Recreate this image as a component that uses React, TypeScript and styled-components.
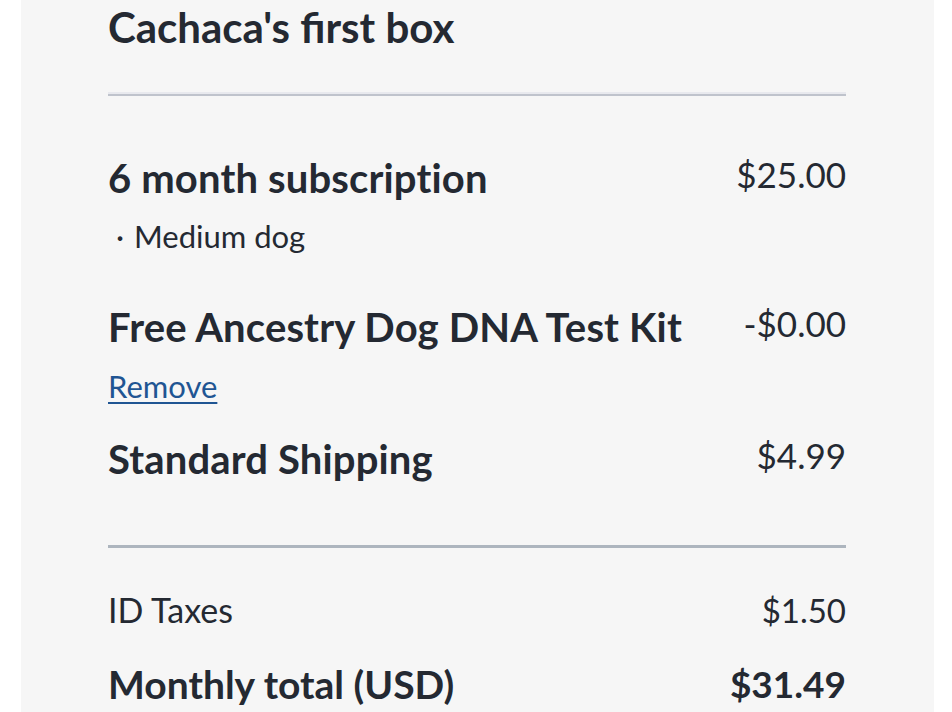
import styled, {createGlobalStyle} from "styled-components";

const GlobalStyle = createGlobalStyle`
    html, body {
        margin: 0;
        padding: 0;
        background: #ffffff;
    }
    body {
        font-family: Lato, "Open Sans", sans-serif;
        color: #242932;
    }
`

const Panel = styled.div`
    margin-left: 21px;
    width: 913px;
    min-height: 712px;
    box-sizing: border-box;
    padding: 0 88px 0 87px;
    background: #f6f6f6;
    overflow: hidden;
`

const Title = styled.h2`
    margin: 3px 0 0;
    font-size: 42px;
    font-weight: 700;
    line-height: 48px;
`

const Divider = styled.hr<{$thick?: boolean; $top: number}>`
    margin: ${p => p.$top}px 0 0;
    border: none;
    height: ${p => p.$thick ? "3px" : "2px"};
    background: ${p => p.$thick ? "#adb5be" : "#bfc3cc"};
    box-shadow: ${p => p.$thick ? "none" : "0 -2px 0 #e8e9ee"};
`

const Items = styled.div`
    display: flex;
    flex-direction: column;
`

const Item = styled.div<{$top: number}>`
    display: flex;
    justify-content: space-between;
    align-items: flex-start;
    margin-top: ${p => p.$top}px;
`

const ItemInfo = styled.div`
    display: flex;
    flex-direction: column;
`

const ItemName = styled.span`
    font-size: 40px;
    font-weight: 700;
    line-height: 48px;
    letter-spacing: 0.15px;
`

const Detail = styled.span`
    font-size: 31px;
    line-height: 36px;
    margin-top: 16px;
    padding-left: 8px;

    &::before {
        content: "·";
        margin-right: 10px;
    }
`

const RemoveLink = styled.a`
    align-self: flex-start;
    font-size: 31px;
    line-height: 36px;
    margin-top: 17px;
    color: #1f5593;
    text-decoration: underline;
    text-decoration-thickness: 2px;
    text-underline-offset: 4px;
    cursor: pointer;
`

const Price = styled.span`
    font-size: 35px;
    line-height: 40px;
`

const Totals = styled.div`
    display: flex;
    flex-direction: column;
`

const TotalRow = styled.div<{$strong?: boolean; $top: number}>`
    display: flex;
    justify-content: space-between;
    align-items: center;
    margin-top: ${p => p.$top}px;
    font-size: ${p => p.$strong ? "39px" : "34px"};
    font-weight: ${p => p.$strong ? 700 : 400};
    line-height: 44px;
`

const Amount = styled.span<{$size: number}>`
    font-size: ${p => p.$size}px;
`

export default function App() {
    return <>
        <GlobalStyle/>
        <Panel>
            <Title>Cachaca's first box</Title>
            <Divider $top={43}/>
            <Items>
                <Item $top={58}>
                    <ItemInfo>
                        <ItemName>6 month subscription</ItemName>
                        <Detail>Medium dog</Detail>
                    </ItemInfo>
                    <Price>$25.00</Price>
                </Item>
                <Item $top={49}>
                    <ItemInfo>
                        <ItemName>Free Ancestry Dog DNA Test Kit</ItemName>
                        <RemoveLink>Remove</RemoveLink>
                    </ItemInfo>
                    <Price>-$0.00</Price>
                </Item>
                <Item $top={31}>
                    <ItemInfo>
                        <ItemName>Standard Shipping</ItemName>
                    </ItemInfo>
                    <Price>$4.99</Price>
                </Item>
            </Items>
            <Divider $thick $top={62}/>
            <Totals>
                <TotalRow $top={40}>
                    <span>ID Taxes</span>
                    <Amount $size={33}>$1.50</Amount>
                </TotalRow>
                <TotalRow $strong $top={30}>
                    <span>Monthly total (USD)</span>
                    <Amount $size={37}>$31.49</Amount>
                </TotalRow>
            </Totals>
        </Panel>
    </>
}
